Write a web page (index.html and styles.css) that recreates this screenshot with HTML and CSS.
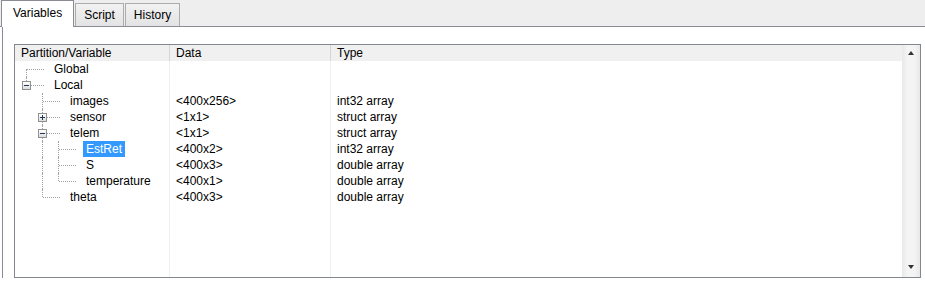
FILE: index.html
```html
<!doctype html>
<html lang="en">
  <head>
    <meta charset="UTF-8" />
    <title>Workspace Variables</title>
    <link rel="stylesheet" href="styles.css">
  </head>
  <body>
    <div class="tabs">
      <div class="tab active">Variables</div>
      <div class="tab">Script</div>
      <div class="tab">History</div>
    </div>

    <div class="panel">
      <div class="list">
        <div class="grid">
          <div class="row header">
            <div class="cell">Partition/Variable</div>
            <div class="cell">Data</div>
            <div class="cell">Type</div>
          </div>

          <div class="row">
            <div class="cell name">
              <span class="branch first"></span>
              <span class="label">Global</span>
            </div>
            <div class="cell"></div>
            <div class="cell"></div>
          </div>
          <div class="row">
            <div class="cell name">
              <span class="branch end"><span class="toggle open"></span></span>
              <span class="label">Local</span>
            </div>
            <div class="cell"></div>
            <div class="cell"></div>
          </div>
          <div class="row">
            <div class="cell name">
              <span class="indent"></span>
              <span class="branch tee"></span>
              <span class="label">images</span>
            </div>
            <div class="cell">&lt;400x256&gt;</div>
            <div class="cell">int32 array</div>
          </div>
          <div class="row">
            <div class="cell name">
              <span class="indent"></span>
              <span class="branch tee"><span class="toggle"></span></span>
              <span class="label">sensor</span>
            </div>
            <div class="cell">&lt;1x1&gt;</div>
            <div class="cell">struct array</div>
          </div>
          <div class="row">
            <div class="cell name">
              <span class="indent"></span>
              <span class="branch tee"><span class="toggle open"></span></span>
              <span class="label">telem</span>
            </div>
            <div class="cell">&lt;1x1&gt;</div>
            <div class="cell">struct array</div>
          </div>
          <div class="row">
            <div class="cell name">
              <span class="indent"></span>
              <span class="indent pipe"></span>
              <span class="branch tee"></span>
              <span class="label selected">EstRet</span>
            </div>
            <div class="cell">&lt;400x2&gt;</div>
            <div class="cell">int32 array</div>
          </div>
          <div class="row">
            <div class="cell name">
              <span class="indent"></span>
              <span class="indent pipe"></span>
              <span class="branch tee"></span>
              <span class="label">S</span>
            </div>
            <div class="cell">&lt;400x3&gt;</div>
            <div class="cell">double array</div>
          </div>
          <div class="row">
            <div class="cell name">
              <span class="indent"></span>
              <span class="indent pipe"></span>
              <span class="branch end"></span>
              <span class="label">temperature</span>
            </div>
            <div class="cell">&lt;400x1&gt;</div>
            <div class="cell">double array</div>
          </div>
          <div class="row">
            <div class="cell name">
              <span class="indent"></span>
              <span class="branch end"></span>
              <span class="label">theta</span>
            </div>
            <div class="cell">&lt;400x3&gt;</div>
            <div class="cell">double array</div>
          </div>

          <!-- empty space below the rows keeps the column lines -->
          <div class="row filler">
            <div class="cell"></div>
            <div class="cell"></div>
            <div class="cell"></div>
          </div>
        </div>

        <div class="scrollbar">
          <span class="arrow up"></span>
          <span class="arrow down"></span>
        </div>
      </div>
    </div>
  </body>
</html>
```

FILE: styles.css
```css
html,
body {
  height: 100%;
  overflow: hidden;
}
body {
  margin: 0;
  font-family: "Liberation Sans", Arial, sans-serif;
  font-size: 12px;
  color: #000;
  background: #fff;
}

/* tab strip */
.tabs {
  display: flex;
  align-items: flex-end;
  height: 26px;
  padding-left: 1px;
  background: #eeeeee;
  border-bottom: 1px solid #898c95;
}
.tab {
  height: 22px;
  line-height: 22px;
  padding: 0 8px;
  border: 1px solid #acacac;
  border-bottom: none;
  background: linear-gradient(#f2f2f2, #e3e3e3);
  margin-right: 1px;
}
.tab.active {
  height: 26px;
  line-height: 24px;
  padding: 0 11px;
  margin-bottom: -1px;
  border-color: #898c95;
  background: #fff;
}

/* tab page */
.panel {
  margin-left: 2px;
  border-left: 1px solid #898c95;
  padding: 17px 0 0 11px;
}
.list {
  display: flex;
  width: 907px;
  height: 234px;
  box-sizing: border-box;
  border: 1px solid #828790;
  background: #fff;
}
.grid {
  flex: 1;
  display: flex;
  flex-direction: column;
}
.row {
  display: grid;
  grid-template-columns: 155px 161px 1fr;
  height: 16px;
  line-height: 16px;
}
.cell {
  padding-left: 6px;
  border-right: 1px solid #f0f0f0;
  white-space: nowrap;
}
.cell:last-child {
  border-right: none;
}
.header {
  background: #f0f0f0;
}
.header .cell {
  border-right-color: #d5d5d5;
}
.filler {
  flex: 1;
}

/* tree column */
.cell.name {
  display: flex;
  padding-left: 3px;
}
.indent,
.branch {
  flex: none;
  position: relative;
  width: 16px;
}
.branch {
  width: 33px;
}
.indent.pipe::before,
.branch::before {
  content: "";
  position: absolute;
  left: 8px;
  top: 0;
  bottom: 0;
  border-left: 1px dotted #a0a0a0;
}
.branch.first::before {
  top: 8px;
}
.branch.end::before {
  bottom: 8px;
}
.branch::after {
  content: "";
  position: absolute;
  left: 9px;
  top: 8px;
  width: 17px;
  border-top: 1px dotted #a0a0a0;
}
.toggle {
  position: absolute;
  z-index: 1;
  left: 4px;
  top: 4px;
  width: 7px;
  height: 7px;
  border: 1px solid #919191;
  background: linear-gradient(#ffffff, #dcdcdc);
}
.toggle::before,
.toggle::after {
  content: "";
  position: absolute;
  background: #1e395b;
}
.toggle::before {
  left: 1px;
  top: 3px;
  width: 5px;
  height: 1px;
}
.toggle::after {
  left: 3px;
  top: 1px;
  width: 1px;
  height: 5px;
}
.toggle.open::after {
  display: none;
}
.label {
  padding: 0 3px;
}
.label.selected {
  background: #3399ff;
  color: #fff;
}

/* vertical scrollbar */
.scrollbar {
  width: 18px;
  display: flex;
  flex-direction: column;
  justify-content: space-between;
  align-items: center;
  padding: 6px 0 8px;
  background: linear-gradient(90deg, #e8e8e8, #f4f4f4 30%, #f4f4f4 70%, #e8e8e8);
}
.arrow {
  width: 0;
  height: 0;
  border-left: 3px solid transparent;
  border-right: 3px solid transparent;
}
.arrow.up {
  border-bottom: 4px solid #333;
}
.arrow.down {
  border-top: 4px solid #333;
}
```
